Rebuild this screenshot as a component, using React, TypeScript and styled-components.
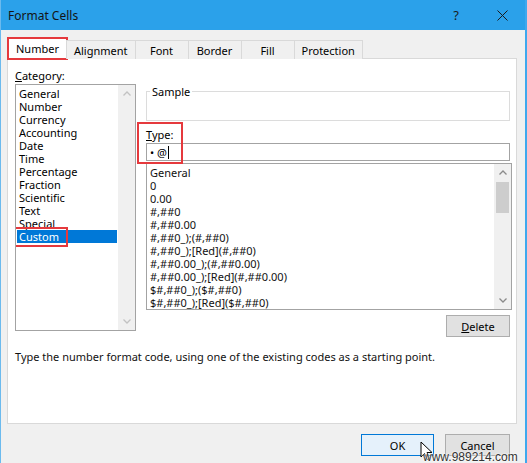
import styled, { createGlobalStyle } from 'styled-components';

const GlobalStyle = createGlobalStyle`
  html, body { margin: 0; padding: 0; background: #ffffff; }
  * { box-sizing: border-box; }
`;

const uiFont = `"Segoe UI", "Noto Sans", "DejaVu Sans", sans-serif`;

const categories = [
  'General',
  'Number',
  'Currency',
  'Accounting',
  'Date',
  'Time',
  'Percentage',
  'Fraction',
  'Scientific',
  'Text',
  'Special',
  'Custom',
];

const formats = [
  'General',
  '0',
  '0.00',
  '#,##0',
  '#,##0.00',
  '#,##0_);(#,##0)',
  '#,##0_);[Red](#,##0)',
  '#,##0.00_);(#,##0.00)',
  '#,##0.00_);[Red](#,##0.00)',
  '$#,##0_);($#,##0)',
  '$#,##0_);[Red]($#,##0)',
];

const tabs = ['Number', 'Alignment', 'Font', 'Border', 'Fill', 'Protection'];

function Chevron({ up, light }: { up?: boolean; light?: boolean }) {
  return (
    <svg width="8" height="5" viewBox="0 0 8 5">
      <polyline
        points={up ? '0.5,4.5 4,1 7.5,4.5' : '0.5,0.5 4,4 7.5,0.5'}
        fill="none"
        stroke={light ? '#c2c2c2' : '#8a8a8a'}
        strokeWidth="1.3"
      />
    </svg>
  );
}

function App() {
  return (
    <>
      <GlobalStyle />
      <Window>
        <TitleBar>
          <Title>Format Cells</Title>
          <TitleButton>?</TitleButton>
          <TitleButton>
            <svg width="11" height="11" viewBox="0 0 11 11">
              <path d="M0.5 0.5 L10.5 10.5 M10.5 0.5 L0.5 10.5" stroke="#1b1b1b" strokeWidth="1" />
            </svg>
          </TitleButton>
        </TitleBar>

        <Body>
          <TabRow>
            {tabs.map((t, i) => (
              <Tab key={t} selected={i === 0}>
                {t}
              </Tab>
            ))}
          </TabRow>

          <Panel>
            <TopRow>
              <LeftCol>
                <Label>
                  <u>C</u>ategory:
                </Label>
                <ListBox height={247}>
                  <Items padTop={2}>
                    {categories.map(c => (
                      <CategoryItem key={c} selected={c === 'Custom'}>
                        {c}
                        {c === 'Custom' && <RedMark left={-3} top={-3} width={54} height={20} />}
                      </CategoryItem>
                    ))}
                  </Items>
                  <ScrollBar>
                    <ArrowBox>
                      <Chevron up light />
                    </ArrowBox>
                    <Track />
                    <ArrowBox>
                      <Chevron light />
                    </ArrowBox>
                  </ScrollBar>
                </ListBox>
              </LeftCol>

              <RightCol>
                <SampleBox>
                  <legend>Sample</legend>
                  <SampleSpace />
                </SampleBox>
                <TypeLabel>
                  <u>T</u>ype:
                </TypeLabel>
                <TypeInput>
                  • @<Caret />
                </TypeInput>
                <ListBox height={147}>
                  <Items padTop={2}>
                    {formats.map(f => (
                      <FormatItem key={f}>{f}</FormatItem>
                    ))}
                  </Items>
                  <ScrollBar>
                    <ArrowBox>
                      <Chevron up />
                    </ArrowBox>
                    <Track>
                      <Thumb />
                    </Track>
                    <ArrowBox>
                      <Chevron />
                    </ArrowBox>
                  </ScrollBar>
                </ListBox>
                <DeleteButton>
                  <u>D</u>elete
                </DeleteButton>
                <RedMark left={-9} top={54} width={46} height={42} />
              </RightCol>
            </TopRow>
            <Description>
              Type the number format code, using one of the existing codes as a starting point.
            </Description>
          </Panel>

          <Footer>
            <DialogButton primary width={73}>
              OK
            </DialogButton>
            <DialogButton width={65}>Cancel</DialogButton>
          </Footer>
        </Body>

        <Cursor width="13" height="20" viewBox="0 0 13 20">
          <path
            d="M1 1 L1 16 L4.5 12.5 L7 18.5 L9.5 17.5 L7 11.5 L12 11.5 Z"
            fill="#ffffff"
            stroke="#000000"
            strokeWidth="1"
            strokeLinejoin="round"
          />
        </Cursor>
        <Watermark>www.989214.com</Watermark>
      </Window>
    </>
  );
}

export default App;

const Window = styled.div`
  position: relative;
  width: 527px;
  height: 463px;
  background: #f0f0f0;
  border-left: 1px solid #6bbaee;
  border-right: 2px solid #3ea8ee;
  font-family: ${uiFont};
  font-size: 11px;
  color: #000;
  display: flex;
  flex-direction: column;
  overflow: hidden;
`;

const TitleBar = styled.div`
  height: 30px;
  flex: none;
  background: #2ba1ea;
  display: flex;
  align-items: center;
  padding-left: 7px;
`;

const Title = styled.div`
  flex: 1;
  font-size: 12px;
  color: #141414;
`;

const TitleButton = styled.div`
  width: 46px;
  height: 30px;
  display: flex;
  align-items: center;
  justify-content: center;
  font-size: 13px;
  color: #1b1b1b;
`;

const Body = styled.div`
  flex: 1;
  display: flex;
  flex-direction: column;
  padding: 8px 8px 0 6px;
`;

const TabRow = styled.div`
  display: flex;
  align-items: flex-end;
  height: 21px;
  padding-left: 2px;
  position: relative;
  z-index: 1;
`;

const Tab = styled.div<{ selected?: boolean }>`
  min-width: 54px;
  height: ${p => (p.selected ? 21 : 19)}px;
  padding: 0 7px;
  margin-left: -1px;
  display: flex;
  align-items: center;
  justify-content: center;
  border: 1px solid #d9d9d9;
  border-bottom: ${p => (p.selected ? '1px solid #ffffff' : 'none')};
  background: ${p => (p.selected ? '#ffffff' : '#f0f0f0')};
  outline: ${p => (p.selected ? '2px solid #e5393d' : 'none')};
  outline-offset: -1px;
`;

const Panel = styled.div`
  height: 366px;
  margin-top: -1px;
  background: #ffffff;
  border: 1px solid #d9d9d9;
  padding: 9px 4px 0 7px;
  display: flex;
  flex-direction: column;
`;

const TopRow = styled.div`
  display: flex;
  gap: 10px;
`;

const LeftCol = styled.div`
  width: 121px;
  display: flex;
  flex-direction: column;
`;

const Label = styled.div`
  line-height: 15px;
  height: 15px;
  margin-bottom: 1px;
`;

const ListBox = styled.div<{ height: number }>`
  height: ${p => p.height}px;
  border: 1px solid #a3a3a3;
  display: flex;
  background: #ffffff;
`;

const Items = styled.div<{ padTop: number }>`
  flex: 1;
  padding: ${p => p.padTop}px 1px 0 1px;
  overflow: hidden;
`;

const CategoryItem = styled.div<{ selected?: boolean }>`
  position: relative;
  height: 13px;
  line-height: 13px;
  padding-left: 2px;
  white-space: nowrap;
  background: ${p => (p.selected ? '#0078d7' : 'transparent')};
  color: ${p => (p.selected ? '#ffffff' : '#000000')};
`;

const FormatItem = styled.div`
  height: 13px;
  line-height: 13px;
  padding-left: 2px;
  white-space: nowrap;
  color: #111;
`;

const ScrollBar = styled.div`
  width: 17px;
  background: #f0f0f0;
  display: flex;
  flex-direction: column;
`;

const ArrowBox = styled.div`
  height: 17px;
  display: flex;
  align-items: center;
  justify-content: center;
`;

const Track = styled.div`
  flex: 1;
  padding: 1px 2px 0 2px;
`;

const Thumb = styled.div`
  height: 31px;
  background: #cdcdcd;
`;

const RedMark = styled.div<{ left: number; top: number; width: number; height: number }>`
  position: absolute;
  left: ${p => p.left}px;
  top: ${p => p.top}px;
  width: ${p => p.width}px;
  height: ${p => p.height}px;
  border: 2px solid #e5393d;
  pointer-events: none;
`;

const RightCol = styled.div`
  position: relative;
  flex: 1;
  display: flex;
  flex-direction: column;
  padding-top: 17px;
`;

const SampleBox = styled.fieldset`
  margin: 0 2px 0 0;
  padding: 0 3px;
  border: 1px solid #dcdcdc;

  legend {
    padding: 0 2px;
    line-height: 13px;
    font-size: 11px;
  }
`;

const SampleSpace = styled.div`
  height: 22px;
`;

const TypeLabel = styled.div`
  margin-top: 7px;
  line-height: 14px;
  height: 14px;
`;

const TypeInput = styled.div`
  height: 18px;
  margin: 1px 2px 2px 0;
  border: 1px solid #a3a3a3;
  padding-left: 3px;
  display: flex;
  align-items: center;
  background: #ffffff;
`;

const Caret = styled.span`
  display: inline-block;
  width: 1px;
  height: 13px;
  margin-left: 1px;
  background: #000;
`;

const DeleteButton = styled.div`
  align-self: flex-end;
  margin: 5px 2px 0 0;
  width: 64px;
  height: 22px;
  background: #e1e1e1;
  border: 1px solid #adadad;
  display: flex;
  align-items: center;
  justify-content: center;
`;

const Description = styled.div`
  margin-top: 12px;
  line-height: 15px;
  color: #111;
`;

const Footer = styled.div`
  display: flex;
  justify-content: flex-end;
  gap: 11px;
  margin: 10px 7px 0 0;
`;

const DialogButton = styled.div<{ primary?: boolean; width: number }>`
  width: ${p => p.width}px;
  height: 22px;
  display: flex;
  align-items: center;
  justify-content: center;
  background: ${p => (p.primary ? '#e5f1fb' : '#e1e1e1')};
  border: 1px solid ${p => (p.primary ? '#0078d7' : '#adadad')};
`;

const Cursor = styled.svg`
  position: absolute;
  left: 419px;
  top: 441px;
`;

const Watermark = styled.div`
  position: absolute;
  left: 422px;
  top: 450px;
  font-family: "Liberation Sans", Arial, sans-serif;
  font-size: 12px;
  color: #333;
  text-shadow: 0 0 2px #fff, 0 0 2px #fff;
`;
